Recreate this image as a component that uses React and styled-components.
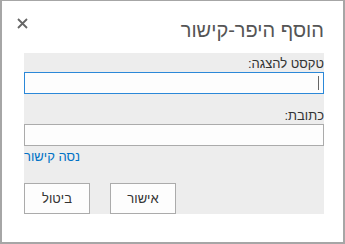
import React from 'react'
import styled, { createGlobalStyle } from 'styled-components'

const Global = createGlobalStyle`
  html, body { margin: 0; padding: 0; background: #fff; }
  body { font-family: "Liberation Sans", "DejaVu Sans", sans-serif; }
`

const Window = styled.div`
  box-sizing: border-box;
  width: 345px;
  height: 244px;
  border: 2px solid #a6a6a6;
  border-top-width: 1px;
  background: #fff;
  direction: rtl;
  display: flex;
  flex-direction: column;
`

const Header = styled.div`
  display: flex;
  align-items: flex-start;
  justify-content: space-between;
  padding: 18px 19px 0 15px;
  height: 34px;
`

const Title = styled.h1`
  margin: 0;
  font-weight: normal;
  font-size: 20px;
  line-height: 23px;
  color: #555;
`

const Close = styled.button`
  border: 0;
  background: none;
  padding: 0;
  margin-top: -1px;
  width: 11px;
  height: 11px;
  display: flex;
  cursor: pointer;
`

const Panel = styled.div`
  margin: 0 19px 0 22px;
  background: #ededed;
  display: flex;
  flex-direction: column;
  padding-top: 4px;
`

const Label = styled.label`
  font-size: 13px;
  line-height: 14px;
  color: #333;
  margin-top: ${p => p.$top || 0}px;
  margin-bottom: 1px;
`

const InputWrap = styled.div`
  position: relative;
`

const Input = styled.input`
  display: block;
  box-sizing: border-box;
  width: 100%;
  height: 22px;
  margin: 0;
  border: 1px solid ${p => (p.$focus ? '#2b88d8' : '#ababab')};
  background: #fdfdfd;
  outline: none;
  font-family: inherit;
`

const Caret = styled.span`
  position: absolute;
  right: 5px;
  top: 4px;
  width: 1px;
  height: 14px;
  background: #666;
`

const Link = styled.a`
  font-size: 13px;
  line-height: 14px;
  color: #0072c6;
  text-decoration: none;
  align-self: flex-end;
  margin-top: 4px;
  direction: rtl;
`

const Buttons = styled.div`
  display: flex;
  justify-content: flex-end;
  gap: 20px;
  margin-top: 19px;
`

const Button = styled.button`
  box-sizing: border-box;
  width: 66px;
  height: 31px;
  border: 1px solid #ababab;
  background: #fdfdfd;
  font-family: inherit;
  font-size: 13px;
  color: #333;
  padding: 0;
`

export default function App() {
  return (
    <>
      <Global />
      <Window>
        <Header>
          <Title>הוסף היפר-קישור</Title>
          <Close aria-label="סגור">
            <svg width="11" height="11" viewBox="0 0 11 11">
              <path d="M1 1 L10 10 M10 1 L1 10" stroke="#666" strokeWidth="1.8" fill="none" />
            </svg>
          </Close>
        </Header>
        <Panel>
          <Label>טקסט להצגה:</Label>
          <InputWrap>
            <Input $focus />
            <Caret />
          </InputWrap>
          <Label $top={15}>כתובת:</Label>
          <Input />
          <Link href="#">נסה קישור</Link>
          <Buttons>
            <Button>אישור</Button>
            <Button>ביטול</Button>
          </Buttons>
        </Panel>
      </Window>
    </>
  )
}
